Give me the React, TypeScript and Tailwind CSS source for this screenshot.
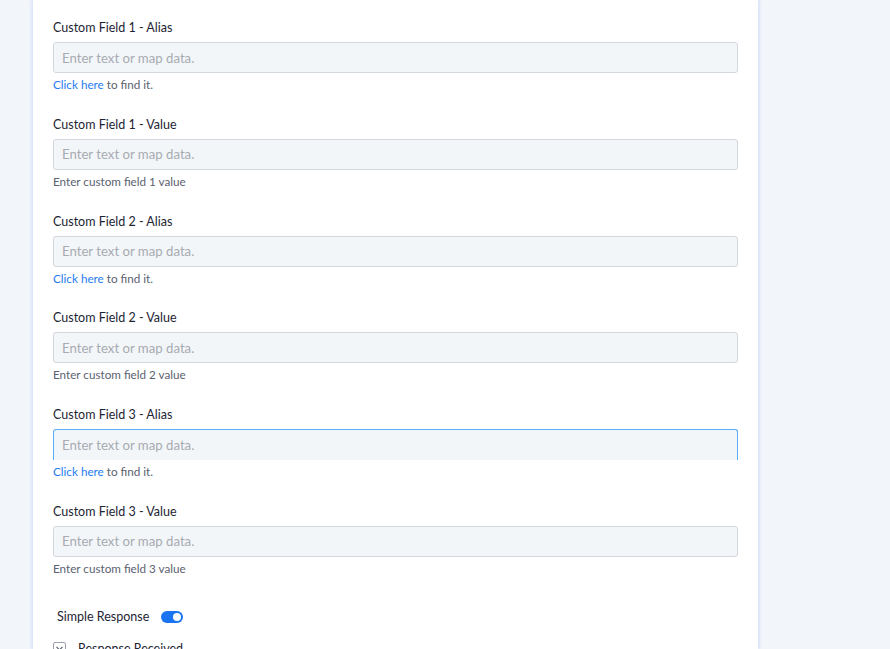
import { useState } from "react";

type Field = {
  label: string;
  help: "link" | string;
  focused?: boolean;
};

const fields: Field[] = [
  { label: "Custom Field 1 - Alias", help: "link" },
  { label: "Custom Field 1 - Value", help: "Enter custom field 1 value" },
  { label: "Custom Field 2 - Alias", help: "link" },
  { label: "Custom Field 2 - Value", help: "Enter custom field 2 value" },
  { label: "Custom Field 3 - Alias", help: "link", focused: true },
  { label: "Custom Field 3 - Value", help: "Enter custom field 3 value" },
];

function FieldRow({ field }: { field: Field }) {
  return (
    <div className="mb-[23.8px]">
      <div className="text-[12.5px] leading-[18px] text-[#1d2433]">{field.label}</div>
      <div
        className={
          field.focused
            ? "mt-[5px] h-[31px] rounded-t-[3px] border-x border-t border-[#5aacff] bg-[#f3f6f9]"
            : "mt-[5px] h-[31px] rounded-[3px] border border-[#d3d7de] bg-[#f3f6f9]"
        }
      >
        <input
          type="text"
          placeholder="Enter text or map data."
          className="block h-full w-full bg-transparent px-[8px] text-[13.2px] placeholder:text-[#a7abb1] outline-none"
        />
      </div>
      <div className="mt-[3px] text-[11.7px] leading-[16px] text-[#5b6270]">
        {field.help === "link" ? (
          <>
            <a href="#" className="text-[#1f7cf0]">
              Click here
            </a>{" "}
            to find it.
          </>
        ) : (
          field.help
        )}
      </div>
    </div>
  );
}

export default function App() {
  const [simple, setSimple] = useState(true);

  return (
    <div className="h-[649px] overflow-hidden bg-[#f2f5f9] pl-[33px] font-['Lato','Open_Sans',sans-serif]">
      <div className="w-[725px] h-full bg-white px-[20px] pt-[19px] shadow-[-2px_0_2px_#dbe4fa,2px_0_2px_#dbe4fa]">
        {fields.map((f) => (
          <FieldRow key={f.label} field={f} />
        ))}

        <div className="mt-[32px] flex items-center pl-[4px]">
          <span className="text-[12.5px] leading-[18px] text-[#1d2433]">Simple Response</span>
          <button
            type="button"
            onClick={() => setSimple(!simple)}
            className={
              simple
                ? "ml-[12px] flex h-[12px] w-[22px] items-center justify-end rounded-full bg-[#1a73f0] px-[2px]"
                : "ml-[12px] flex h-[12px] w-[22px] items-center justify-start rounded-full bg-[#c5cbd3] px-[2px]"
            }
          >
            <span className="block h-[8px] w-[8px] rounded-full bg-white" />
          </button>
        </div>

        <div className="mt-[14px] flex items-center">
          <span className="flex h-[13px] w-[13px] items-center justify-center rounded-[2px] border border-[#9aa1ab] text-[#5b6270]">
            <svg width="7" height="5" viewBox="0 0 7 5" fill="none">
              <path d="M0.5 0.8 L3.5 4 L6.5 0.8" stroke="currentColor" strokeWidth="1.2" />
            </svg>
          </span>
          <span className="ml-[12px] text-[12.5px] leading-[18px] text-[#1d2433]">Response Received</span>
        </div>
      </div>
    </div>
  );
}
